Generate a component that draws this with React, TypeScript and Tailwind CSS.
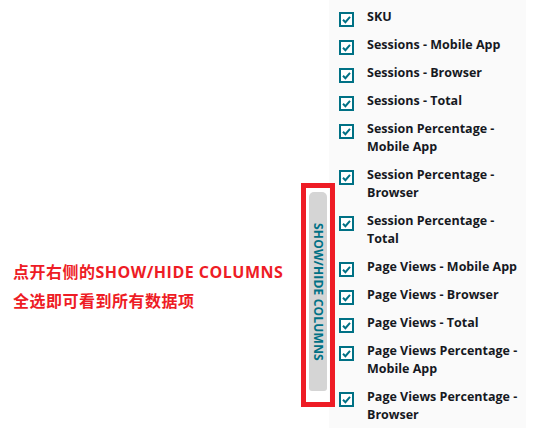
import React from "react";

const items: string[][] = [
  ["SKU"],
  ["Sessions - Mobile App"],
  ["Sessions - Browser"],
  ["Sessions - Total"],
  ["Session Percentage -", "Mobile App"],
  ["Session Percentage -", "Browser"],
  ["Session Percentage -", "Total"],
  ["Page Views - Mobile App"],
  ["Page Views - Browser"],
  ["Page Views - Total"],
  ["Page Views Percentage -", "Mobile App"],
  ["Page Views Percentage -", "Browser"],
];

function Check() {
  return (
    <div className="-mb-[1px] mt-[4px] flex h-[15px] w-[15px] shrink-0 items-center justify-center border-2 border-[#007185] bg-white">
      <svg width="11" height="11" viewBox="0 0 11 11">
        <path d="M2 5.8 L4.4 8.2 L9 2.8" fill="none" stroke="#007185" strokeWidth="2" />
      </svg>
    </div>
  );
}

export default function App() {
  return (
    <div className="relative flex h-[428px] w-[551px] overflow-hidden bg-white">
      <div className="w-[309px] shrink-0 pl-[13px] pt-[258px] font-['Open_Sans','Noto_Sans_CJK_SC',sans-serif] text-[16px] font-bold leading-[29px] tracking-[0.5px] text-[#ee1c25]">
        <div>点开右侧的SHOW/HIDE COLUMNS</div>
        <div>全选即可看到所有数据项</div>
      </div>
      <div className="w-[20px] shrink-0 pt-[192px]">
        <div className="flex h-[199px] w-[18px] items-center justify-center rounded-t-[5px] rounded-b-[3px] bg-[#d5d5d5]">
          <span className="font-['Open_Sans',sans-serif] text-[12px] font-bold tracking-[0.2px] text-[#007185] [writing-mode:vertical-rl]">
            SHOW/HIDE COLUMNS
          </span>
        </div>
      </div>
      <div className="flex h-[428px] w-[197px] shrink-0 flex-col gap-[10px] bg-[#fafafa] pl-[10px] pt-[8px] font-['Open_Sans',sans-serif] text-[12.5px] font-bold leading-[18px] text-[#16191f]">
        {items.map((lines, i) => (
          <div key={i} className="flex gap-[13px]">
            <Check />
            <div>
              {lines.map((l, j) => (
                <div key={j}>{l}</div>
              ))}
            </div>
          </div>
        ))}
      </div>
      <div className="pointer-events-none absolute left-[301px] top-[183px] h-[224px] w-[34px] border-[5px] border-[#ee1c25]" />
    </div>
  );
}
